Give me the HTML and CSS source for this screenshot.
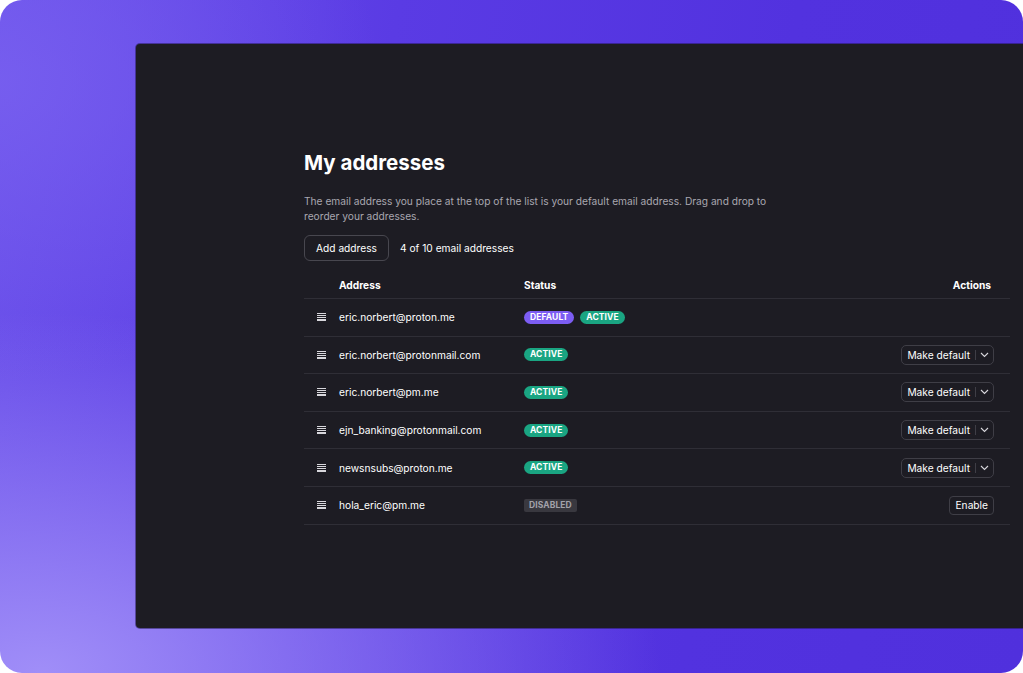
FILE: index.html
```html
<!DOCTYPE html>
<html>
<head>
<meta charset="utf-8">
<link rel="stylesheet" href="styles.css">
</head>
<body>
<div class="frame">
  <div class="panel">
    <div class="content">
      <h1 class="title">My addresses</h1>
      <p class="desc">The email address you place at the top of the list is your default email address. Drag and drop to reorder your addresses.</p>
      <div class="toolbar">
        <button class="btn">Add address</button>
        <span class="count">4 of 10 email addresses</span>
      </div>
      <div class="table">
        <div class="row head">
          <span class="c-handle"></span>
          <span class="c-addr">Address</span>
          <span class="c-status">Status</span>
          <span class="c-actions">Actions</span>
        </div>
        <div class="row">
          <span class="c-handle"><svg class="grip" width="9" height="8" viewBox="0 0 9 8"><path d="M0 0.5H9M0 2.5H9M0 4.5H9M0 6.5H9M0 7.5H9" stroke="#d8d7dc" stroke-width="1"/></svg></span>
          <span class="c-addr">eric.norbert@proton.me</span>
          <span class="c-status"><span class="badge default">DEFAULT</span><span class="badge active">ACTIVE</span></span>
          <span class="c-actions"></span>
        </div>
        <div class="row">
          <span class="c-handle"><svg class="grip" width="9" height="8" viewBox="0 0 9 8"><path d="M0 0.5H9M0 2.5H9M0 4.5H9M0 6.5H9M0 7.5H9" stroke="#d8d7dc" stroke-width="1"/></svg></span>
          <span class="c-addr">eric.norbert@protonmail.com</span>
          <span class="c-status"><span class="badge active">ACTIVE</span></span>
          <span class="c-actions"><span class="split"><span class="split-main">Make default</span><span class="split-arrow"><svg width="9" height="6" viewBox="0 0 9 6"><path d="M1 1L4.5 4.5L8 1" fill="none" stroke="#d8d7dc" stroke-width="1.1"/></svg></span></span></span>
        </div>
        <div class="row">
          <span class="c-handle"><svg class="grip" width="9" height="8" viewBox="0 0 9 8"><path d="M0 0.5H9M0 2.5H9M0 4.5H9M0 6.5H9M0 7.5H9" stroke="#d8d7dc" stroke-width="1"/></svg></span>
          <span class="c-addr">eric.norbert@pm.me</span>
          <span class="c-status"><span class="badge active">ACTIVE</span></span>
          <span class="c-actions"><span class="split"><span class="split-main">Make default</span><span class="split-arrow"><svg width="9" height="6" viewBox="0 0 9 6"><path d="M1 1L4.5 4.5L8 1" fill="none" stroke="#d8d7dc" stroke-width="1.1"/></svg></span></span></span>
        </div>
        <div class="row">
          <span class="c-handle"><svg class="grip" width="9" height="8" viewBox="0 0 9 8"><path d="M0 0.5H9M0 2.5H9M0 4.5H9M0 6.5H9M0 7.5H9" stroke="#d8d7dc" stroke-width="1"/></svg></span>
          <span class="c-addr">ejn_banking@protonmail.com</span>
          <span class="c-status"><span class="badge active">ACTIVE</span></span>
          <span class="c-actions"><span class="split"><span class="split-main">Make default</span><span class="split-arrow"><svg width="9" height="6" viewBox="0 0 9 6"><path d="M1 1L4.5 4.5L8 1" fill="none" stroke="#d8d7dc" stroke-width="1.1"/></svg></span></span></span>
        </div>
        <div class="row">
          <span class="c-handle"><svg class="grip" width="9" height="8" viewBox="0 0 9 8"><path d="M0 0.5H9M0 2.5H9M0 4.5H9M0 6.5H9M0 7.5H9" stroke="#d8d7dc" stroke-width="1"/></svg></span>
          <span class="c-addr">newsnsubs@proton.me</span>
          <span class="c-status"><span class="badge active">ACTIVE</span></span>
          <span class="c-actions"><span class="split"><span class="split-main">Make default</span><span class="split-arrow"><svg width="9" height="6" viewBox="0 0 9 6"><path d="M1 1L4.5 4.5L8 1" fill="none" stroke="#d8d7dc" stroke-width="1.1"/></svg></span></span></span>
        </div>
        <div class="row">
          <span class="c-handle"><svg class="grip" width="9" height="8" viewBox="0 0 9 8"><path d="M0 0.5H9M0 2.5H9M0 4.5H9M0 6.5H9M0 7.5H9" stroke="#d8d7dc" stroke-width="1"/></svg></span>
          <span class="c-addr">hola_eric@pm.me</span>
          <span class="c-status"><span class="badge disabled">DISABLED</span></span>
          <span class="c-actions"><span class="small-btn">Enable</span></span>
        </div>
      </div>
    </div>
  </div>
</div>
</body>
</html>
```

FILE: styles.css
```css
* { box-sizing: border-box; }
html, body { margin: 0; padding: 0; background: #ffffff; }
body { width: 1023px; height: 673px; overflow: hidden; font-family: Inter, "Noto Sans", sans-serif; }

.frame {
  width: 1023px;
  height: 673px;
  border-radius: 22px;
  overflow: hidden;
  padding-top: 44px;
  padding-left: 136px;
  background:
    radial-gradient(ellipse 620px 360px at 40px 673px, rgba(160,142,248,1), rgba(160,142,248,0) 100%),
    radial-gradient(ellipse 380px 300px at 0px 80px, rgba(122,98,240,0.75), rgba(122,98,240,0) 100%),
    linear-gradient(100deg, #6a50ea 0%, #5a3be4 35%, #5232df 70%, #5030dd 100%);
}

.panel {
  width: 900px;
  height: 584px;
  background: #1d1c23;
  border-radius: 4px 0 0 4px;
  box-shadow: 0 0 0 1px rgba(30,20,70,0.5);
  padding: 105px 0 0 168px;
  color: #ffffff;
}

.content { width: 706px; }

.title {
  margin: 0;
  font-size: 20.5px;
  line-height: 28px;
  font-weight: 700;
  color: #ffffff;
}

.desc {
  margin: 17px 0 0 0;
  width: 480px;
  font-size: 10.2px;
  line-height: 15px;
  color: #a9a7b0;
}

.toolbar {
  display: flex;
  align-items: center;
  gap: 11px;
  margin-top: 11px;
}

.btn {
  font-family: inherit;
  font-size: 10.2px;
  color: #ffffff;
  background: transparent;
  border: 1px solid #48474f;
  border-radius: 6px;
  height: 26px;
  width: 85px;
  padding: 0;
}

.count { font-size: 10.2px; color: #ffffff; }

.table { margin-top: 12px; }

.row {
  display: flex;
  align-items: center;
  height: 37.6px;
  border-bottom: 1px solid #2f2e36;
  font-size: 10.2px;
  color: #ffffff;
  padding-right: 16px;
}

.row.head {
  height: 26px;
  font-weight: 700;
  align-items: flex-start;
  padding-top: 6px;
}

.c-handle { width: 35px; padding-left: 13px; display: flex; align-items: center; }
.c-addr { width: 185px; }
.c-status { flex: 1; display: flex; gap: 6px; align-items: center; }
.c-actions { width: 120px; display: flex; justify-content: flex-end; }
.head .c-actions { padding-right: 3px; }

.badge {
  font-size: 8.5px;
  font-weight: 700;
  line-height: 13px;
  padding: 0 6px;
  border-radius: 7px;
  color: #ffffff;
  letter-spacing: 0.1px;
}
.badge.default { background: #7c5df3; }
.badge.active { background: #1aa582; }
.badge.disabled {
  background: #39383f;
  color: #a3a2aa;
  border-radius: 2px;
  padding: 0 5px;
}

.split {
  display: flex;
  align-items: center;
  height: 20px;
  border: 1px solid #3f3e46;
  border-radius: 5px;
}
.split-main { padding: 0 5px 0 5px; border-right: 1px solid #3f3e46; line-height: 10px; }
.split-arrow { width: 17px; display: flex; justify-content: center; align-items: center; }

.small-btn {
  height: 19px;
  line-height: 17px;
  padding: 0 5px;
  border: 1px solid #3f3e46;
  border-radius: 4px;
}
```
